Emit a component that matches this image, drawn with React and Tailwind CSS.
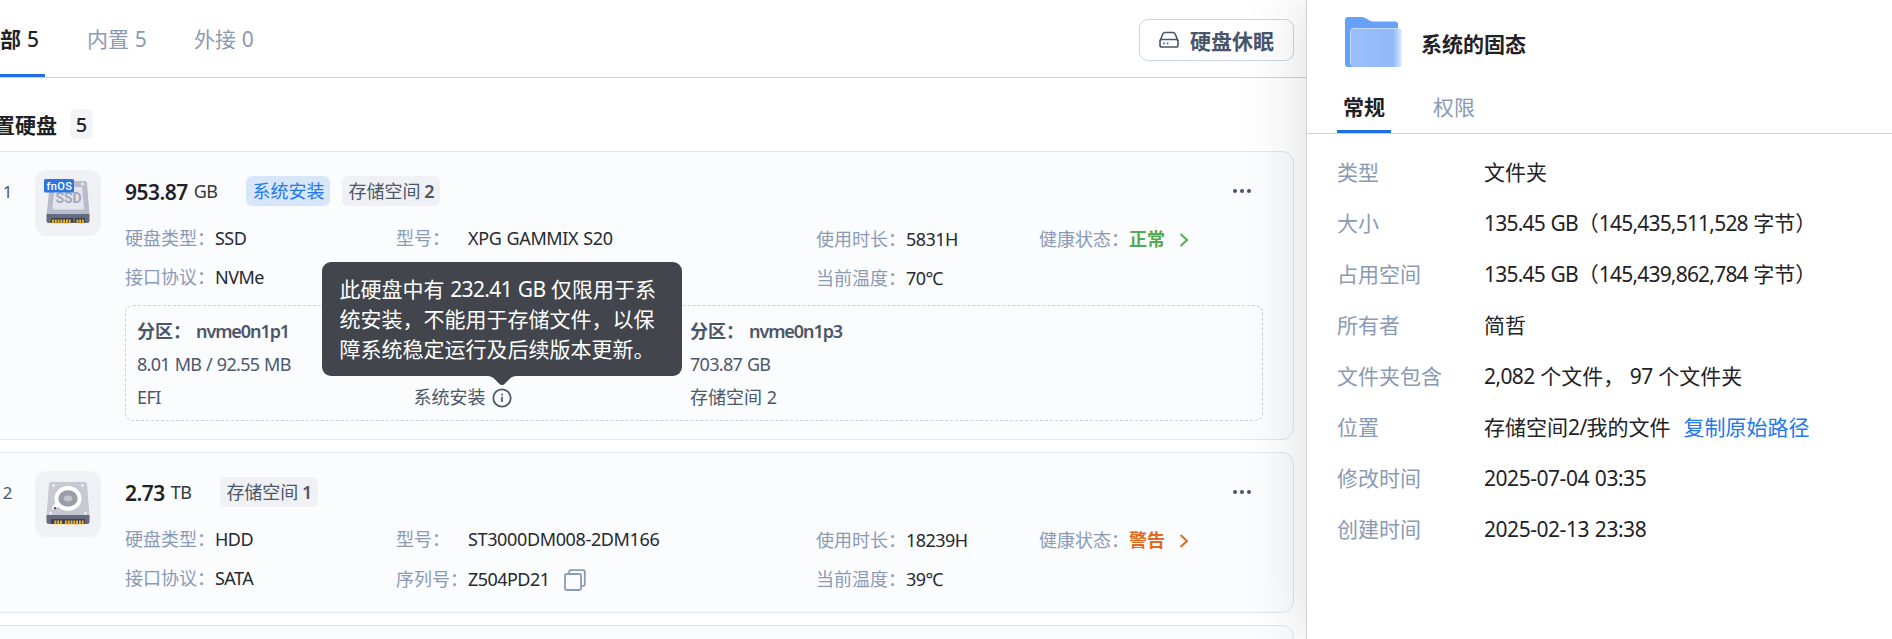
import { Fragment } from "react";
import clsx from "clsx";

const disks = [
  {
    index: 1,
    kind: "ssd",
    size: "953.87",
    unit: "GB",
    system: true,
    space: "2",
    type: "SSD",
    bus: "NVMe",
    model: "XPG GAMMIX S20",
    hours: "5831H",
    temp: "70℃",
    health: "正常",
    healthColor: "text-[#55a954]",
    partitions: [
      { name: "nvme0n1p1", usage: "8.01 MB / 92.55 MB", role: "EFI" },
      { role: "系统安装", info: true },
      { name: "nvme0n1p3", usage: "703.87 GB", role: "存储空间 2" },
    ],
  },
  {
    index: 2,
    kind: "hdd",
    size: "2.73",
    unit: "TB",
    space: "1",
    type: "HDD",
    bus: "SATA",
    model: "ST3000DM008-2DM166",
    serial: "Z504PD21",
    hours: "18239H",
    temp: "39℃",
    health: "警告",
    healthColor: "text-[#e2691f]",
  },
];

const details = [
  { label: "类型", value: "文件夹" },
  { label: "大小", value: "135.45 GB（145,435,511,528 字节）", tracking: "tracking-[-0.038em]" },
  { label: "占用空间", value: "135.45 GB（145,439,862,784 字节）", tracking: "tracking-[-0.038em]" },
  { label: "所有者", value: "简哲" },
  { label: "文件夹包含", value: "2,082 个文件， 97 个文件夹" },
  { label: "位置", value: "存储空间2/我的文件", link: "复制原始路径" },
  { label: "修改时间", value: "2025-07-04 03:35", tracking: "tracking-[-0.022em]" },
  { label: "创建时间", value: "2025-02-13 23:38", tracking: "tracking-[-0.022em]" },
];

// Latin runs are set slightly tighter than the CJK text around them
const Mixed = ({ children, tracking = "tracking-[-0.03em]" }) => (
  <span className="whitespace-pre-wrap">
    {String(children)
      .split(/([\x20-\x7e]+)/)
      .map((part, i) =>
        i % 2 ? (
          <span key={i} className={clsx("[word-spacing:0.04em]", tracking)}>{part}</span>
        ) : (
          <Fragment key={i}>{part}</Fragment>
        )
      )}
  </span>
);

const DiskBase = ({ pins }) => (
  <>
    <path d="M11.5 44h43v6.500a2.500 2.500 0 0 1-2.500 2.500h-38a2.500 2.500 0 0 1-2.500-2.500z" fill="#656a7e" />
    <path d="M16 48h34v5h-34z" fill="#3d4152" />
    {pins.map((x) => (
      <rect key={x} x={x} y="49.500" width="1.800" height="4" fill="#f3b820" />
    ))}
  </>
);

const SsdIcon = () => (
  <svg viewBox="0 0 66 66" className="size-full">
    <path d="M17.500 11h32.500a2 2 0 0 1 2 2l2.500 32h-43l3.500-32a2.500 2.500 0 0 1 2.500-2z" fill="#b9bccb" />
    <path d="M19.500 17h27.500l2 21a1.500 1.500 0 0 1-1.500 1.600h-28.500a1.500 1.500 0 0 1-1.500-1.600z" fill="#e3e5f0" />
    <circle cx="47.500" cy="14" r="1.500" fill="#eceef5" />
    <DiskBase pins={[17, 19.800, 22.600, 25.400, 28.200, 31, 33.800, 41.500, 44.300, 47.100]} />
    <rect x="38" y="48" width="2" height="5" fill="#656a7e" />
    <text x="33.500" y="33.300" textAnchor="middle" fontSize="14" fontWeight="700" fontFamily="Roboto, sans-serif" fill="#a6a8b7" textLength="26">SSD</text>
    <rect x="9" y="9" width="30" height="13.500" rx="1.500" fill="#2d74de" />
    <text x="24.200" y="19.600" textAnchor="middle" fontSize="11" fontWeight="500" fontFamily="Roboto, sans-serif" fill="#fff" textLength="25.500">fnOS</text>
  </svg>
);

const HddIcon = () => (
  <svg viewBox="0 0 66 66" className="size-full">
    <path d="M16.500 11h33a2.500 2.500 0 0 1 2.500 2l2.500 32.500h-43l2.500-32a2.500 2.500 0 0 1 2.500-2.500z" fill="#c6c8d2" />
    {[[18.500, 14.500], [47.500, 14.500], [15.500, 42], [50.500, 42]].map(([x, y]) => (
      <circle key={`${x}-${y}`} cx={x} cy={y} r="1.500" fill="#f0f1f5" />
    ))}
    <path d="M22 33l-3 4" stroke="#fff" strokeWidth="4" strokeLinecap="round" />
    <ellipse cx="33" cy="27.500" rx="13.500" ry="12.500" fill="#fff" />
    <ellipse cx="33" cy="27.500" rx="9.700" ry="8.300" fill="#9a9ca9" />
    <ellipse cx="33" cy="27.500" rx="4.300" ry="3" fill="#c3c5cf" />
    <circle cx="20" cy="37.300" r="1.200" fill="#4a4d5c" />
    <DiskBase pins={[19.500, 22.300, 25.100, 30, 32.800, 35.600, 38.400, 41.200, 44, 46.800]} />
  </svg>
);

const FolderIcon = () => (
  <svg viewBox="0 0 60 52" className="h-[52px] w-[60px]">
    <defs>
      <linearGradient id="front" x1="0" x2="1" y1="0" y2="0">
        <stop offset="0" stopColor="#9abffb" />
        <stop offset="0.820" stopColor="#92b8f8" />
        <stop offset="0.920" stopColor="#b9d2fb" />
        <stop offset="1" stopColor="#e4eefe" />
      </linearGradient>
    </defs>
    <path d="M4 1h14c4 0 7 4.500 11 4.500h22a3 3 0 0 1 3 3v39h-49a4 4 0 0 1-4-4v-39.500a3 3 0 0 1 3-3z" fill="#67a0f7" />
    <path d="M1 40h10v11h-7a3 3 0 0 1-3-3z" fill="#67a0f7" />
    <rect x="6.500" y="12.500" width="51.500" height="38.500" rx="3" fill="url(#front)" />
    <path d="M6.500 48v-32.500a3 3 0 0 1 3-3h45" fill="none" stroke="#c4dafd" />
  </svg>
);

const DriveIcon = () => (
  <svg viewBox="0 0 20 18" className="h-[18px] w-5" fill="none" stroke="#48556b" strokeWidth="1.600">
    <path d="M1 10l2.800-7a2.500 2.500 0 0 1 2.300-1.500h7.800a2.500 2.500 0 0 1 2.300 1.500l2.800 7" />
    <rect x="1" y="8.500" width="18" height="7.500" rx="1.800" />
    <path d="M4.200 12.300h1.600M7.800 12.300h1.600" strokeWidth="1.800" />
  </svg>
);

const CopyIcon = () => (
  <svg viewBox="0 0 22 22" className="ml-3.5 size-[22px]" fill="none" stroke="#8c9bb5" strokeWidth="1.800" strokeLinejoin="round">
    <rect x="1" y="5" width="16" height="16" rx="1.500" />
    <path d="M5.200 4.800v-2.300a1.300 1.300 0 0 1 1.300-1.300h13a1.300 1.300 0 0 1 1.300 1.300v13a1.300 1.300 0 0 1-1.300 1.300h-2.300" />
  </svg>
);

const InfoIcon = () => (
  <svg viewBox="0 0 20 20" className="size-5" fill="none" stroke="#4b5768">
    <circle cx="10" cy="10" r="8.700" strokeWidth="1.800" />
    <path d="M10 8.800v5.200M10 5.800v1.600" strokeWidth="1.700" />
  </svg>
);

const Tooltip = () => (
  <div className="absolute bottom-full left-1/2 z-10 mb-3 w-[360px] -translate-x-1/2 rounded-[9px] bg-[#42464c] px-[18px] py-3 text-[21px] leading-[30px] text-white">
    <Mixed>此硬盘中有 232.41 GB 仅限用于系统安装，不能用于存储文件，以保障系统稳定运行及后续版本更新。</Mixed>
    <svg viewBox="0 0 30 9" className="absolute top-full left-1/2 h-[9px] w-[30px] -translate-x-1/2" fill="#42464c">
      <path d="M0 0h30c-4 0-6 1.500-8 3.500l-4 4c-2 2-4 2-6 0l-4-4c-2-2-4-3.500-8-3.500z" />
    </svg>
  </div>
);

const Tab = ({ children, active, className }) => (
  <div
    className={clsx(
      "flex h-full items-center border-b-3 px-1.5 whitespace-nowrap",
      active ? "border-[#1f6fe0] text-[#1f2226]" : "border-transparent text-[#8a9ab5]",
      className
    )}
  >
    {children}
  </div>
);

const Field = ({ label, labelClass, children, className }) => (
  <div className={clsx("flex h-[39px] items-center whitespace-nowrap", className)}>
    <span className={clsx("text-[#8a9ab5]", labelClass)}>{label}：</span>
    {children}
  </div>
);

const DiskCard = ({ disk }) => (
  <div className="flex rounded-xl border border-[#dfe6ee] bg-[#fbfcfe] pt-[18px] pr-[30px] pl-6 text-lg leading-[27px]">
    <span className="mr-[18px] flex h-[42px] w-[19px] items-center justify-center text-[17px] text-[#4b5768]">
      {disk.index}
    </span>
    <div className="mr-6 size-[66px] shrink-0 rounded-xl bg-[#f0f1f5]">
      {disk.kind === "ssd" ? <SsdIcon /> : <HddIcon />}
    </div>
    <div className="grow">
      <div className="flex h-[42px] items-center">
        <span className="pt-0.5 text-[21px] font-semibold tracking-[-0.025em] text-[#1f2226]">{disk.size}</span>
        <span className="ml-1.5 text-lg tracking-[-0.03em] text-[#33373d]">{disk.unit}</span>
        <div className="ml-[29px] flex gap-3">
          {disk.system && (
            <span className="h-[30px] rounded-md bg-[#d8e6fa] px-1.5 leading-[30px] text-[#2478ee]">系统安装</span>
          )}
          <span className="h-[30px] rounded-md bg-[#f0f1f4] px-1.5 leading-[30px] text-[#4b5768]">
            存储空间 <b className="-ml-px font-semibold">{disk.space}</b>
          </span>
        </div>
        <svg viewBox="0 0 20 6" className="mr-[11px] ml-auto h-1.5 w-5" fill="#48556b">
          <circle cx="3" cy="3" r="2" />
          <circle cx="10" cy="3" r="2" />
          <circle cx="17" cy="3" r="2" />
        </svg>
      </div>

      <div className="mt-[7px] grid grid-cols-[271px_420px_223px_224px] text-[#26292e]">
        <Field label="硬盘类型"><Mixed>{disk.type}</Mixed></Field>
        <Field label="型号" labelClass="w-[72px]"><Mixed tracking="tracking-[-0.02em]">{disk.model}</Mixed></Field>
        <Field label="使用时长" className="pt-0.5"><Mixed>{disk.hours}</Mixed></Field>
        <Field label="健康状态" className="pt-0.5">
          <span className={clsx("flex items-center font-bold", disk.healthColor)}>
            {disk.health}
            <svg viewBox="0 0 10 14" className="ml-3.5 h-3.5 w-2.5" fill="none" stroke="currentColor" strokeWidth="2">
              <path d="M1.500 1l6.500 6-6.500 6" />
            </svg>
          </span>
        </Field>
        <Field label="接口协议"><Mixed>{disk.bus}</Mixed></Field>
        {disk.serial ? (
          <Field label="序列号" labelClass="w-[72px]" className="pt-0.5">
            <Mixed>{disk.serial}</Mixed>
            <CopyIcon />
          </Field>
        ) : (
          <div />
        )}
        <Field label="当前温度" className="pt-0.5"><Mixed>{disk.temp}</Mixed></Field>
      </div>

      {disk.partitions ? (
        <div className="mt-2 mb-[18px] flex h-[116px] rounded-lg border border-dashed border-[#c6d1dd] pt-[9px] pl-[11px] leading-[33px] text-[#4b5768]">
          {disk.partitions.map((part, i) => (
            <div key={i} className="w-[276.5px]">
              <div className="h-[33px]">
                {part.name && (
                  <>
                    <span className="mr-[5px] font-bold">分区：</span>
                    <span className="font-semibold tracking-[-0.06em]">{part.name}</span>
                  </>
                )}
              </div>
              <div className="h-[33px]">
                {part.usage && <Mixed tracking="tracking-[-0.038em]">{part.usage}</Mixed>}
              </div>
              <div className="flex h-[33px] items-center">
                <Mixed>{part.role}</Mixed>
                {part.info && (
                  <div className="relative ml-1.5">
                    <InfoIcon />
                    <Tooltip />
                  </div>
                )}
              </div>
            </div>
          ))}
        </div>
      ) : (
        <div className="h-3.5" />
      )}
    </div>
  </div>
);

const DiskPanel = () => (
  <div className="w-[1306px] shrink-0">
    <div className="flex h-[78px] justify-between border-b border-[#c6d3e0] pr-3">
      <div className="-ml-[27px] flex h-[77px] gap-9 text-[21px]">
        <Tab active className="pt-1.5">
          <b>全部</b>
          <span className="ml-1.5 font-medium">5</span>
        </Tab>
        <Tab className="pt-1.5"><Mixed>内置 5</Mixed></Tab>
        <Tab className="pt-1.5"><Mixed>外接 0</Mixed></Tab>
      </div>
      <button className="mt-[19px] flex h-[42px] w-[155px] items-center rounded-[9px] border border-[#c9d5e2] pl-[19px] text-[21px] font-bold text-[#48556b]">
        <DriveIcon />
        <span className="ml-[11px] pt-1">硬盘休眠</span>
      </button>
    </div>

    <div className="-ml-[27px] w-[1321px]">
      <div className="flex h-[73px] items-center pt-[19px] text-[21px] text-[#1f2226]">
        <b className="pt-1">内置硬盘</b>
        <span className="ml-[13px] flex h-[30px] w-[23px] items-center justify-center rounded-[5px] bg-[#f3f4f6] pt-0.5 text-[20px] font-medium">
          5
        </span>
      </div>
      <div className="flex flex-col gap-3">
        {disks.map((disk) => (
          <DiskCard key={disk.index} disk={disk} />
        ))}
        <div className="h-40 rounded-xl border border-[#dfe6ee] bg-[#fbfcfe]" />
      </div>
    </div>
  </div>
);

const DetailPanel = () => (
  <div className="relative z-10 grow border-l border-[#cfd1d3] bg-white text-[21px] shadow-[0_0_60px_rgba(0,0,0,0.15)]">
    <div className="flex h-[83px] items-center pl-[37px] text-[#1f2226]">
      <FolderIcon />
      <b className="mt-[7px] ml-[17px]">系统的固态</b>
    </div>
    <div className="flex h-[51px] gap-9 border-b border-[#c6d3e0] pl-[30px]">
      <Tab active className="pt-0.5"><b>常规</b></Tab>
      <Tab className="pt-0.5">权限</Tab>
    </div>
    <div className="pt-[13px] pl-[30px]">
      {details.map((row) => (
        <div key={row.label} className="flex h-[51px] items-center whitespace-nowrap">
          <span className="w-[147px] text-[#8a9ab5]">{row.label}</span>
          <span className="text-[#1f2226]"><Mixed tracking={row.tracking}>{row.value}</Mixed></span>
          {row.link && <a className="ml-[13px] text-[#2478ee]">{row.link}</a>}
        </div>
      ))}
    </div>
  </div>
);

function App() {
  return (
    <div className="flex h-[639px] w-[1892px] overflow-hidden bg-white font-['Noto_Sans','Noto_Sans_CJK_SC',sans-serif]">
      <DiskPanel />
      <DetailPanel />
    </div>
  );
}

export default App;
